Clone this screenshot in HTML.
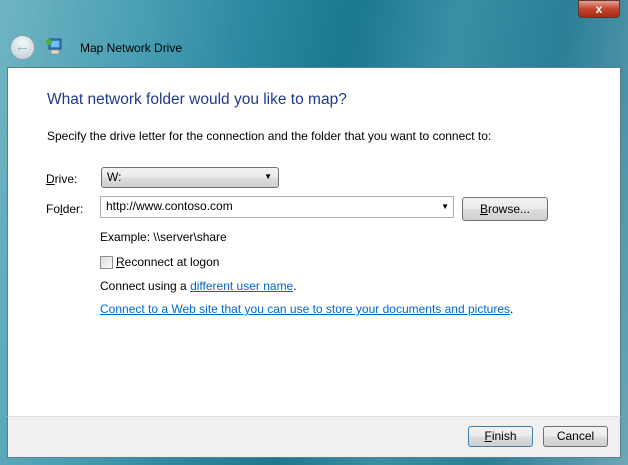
<!DOCTYPE html>
<html><head><style>
*{margin:0;padding:0;box-sizing:border-box}
body{width:628px;height:465px;overflow:hidden;font-family:"Liberation Sans",sans-serif;font-size:12px;color:#000;position:relative;
background:linear-gradient(100deg,#6fb5c4 0%,#4a9fb3 20%,#2d8aa3 35%,#1a7890 50%,#3a8fa5 65%,#2a7e96 80%,#6ba7b8 100%);}
.abs{position:absolute}
.white{left:7px;top:67px;width:614px;height:349px;background:#fff;border:1px solid #5a7f8c;border-bottom:none}
.foot{left:7px;top:416px;width:614px;height:42px;background:#f0f0f0;border:1px solid #5a7f8c;border-top:1px solid #dfdfdf}
.btn{border:1px solid #707070;border-radius:3px;background:linear-gradient(#f2f2f2 0%,#ebebeb 50%,#dddddd 51%,#cfcfcf 100%);text-align:center;line-height:20px}
a{color:#0066cc;text-decoration:underline}
.u{text-decoration:underline}
</style></head><body>
<div class="abs" style="left:578px;top:0;width:42px;height:18px;border-radius:0 0 4px 4px;background:linear-gradient(#e8a090,#c0452e 50%,#a82a15);border:1px solid #5a3a30;color:#fff;font-weight:bold;text-align:center;line-height:16px;font-size:12px">x</div>
<div class="abs" style="left:10px;top:35px;width:25px;height:25px;border-radius:50%;background:radial-gradient(circle at 50% 30%,#f4f8f9,#b8cdd3);border:1px solid #8aa3ab;color:#9ab;font-size:15px;text-align:center;line-height:22px">&#8592;</div>
<svg class="abs" style="left:45px;top:37px" width="18" height="19"><rect x="4" y="2" width="12" height="10" fill="#3a7fd0" stroke="#2a4c7a"/><rect x="6" y="4" width="8" height="6" fill="#6fc0f0"/><circle cx="4" cy="5" r="3" fill="#4caf3a"/><rect x="6" y="13" width="8" height="4" fill="#ddd" stroke="#999"/></svg>
<div class="abs" style="left:80px;top:41px;color:#000;font-size:12px">Map Network Drive</div>
<div class="abs white"></div>
<div class="abs" style="left:47px;top:91px;font-size:15.5px;color:#1e3a8c">What network folder would you like to map?</div>
<div class="abs" style="left:47px;top:129px">Specify the drive letter for the connection and the folder that you want to connect to:</div>
<div class="abs" style="left:46px;top:172px"><span class="u">D</span>rive:</div>
<div class="abs btn" style="left:101px;top:167px;width:178px;height:21px;text-align:left;padding-left:5px;line-height:18px">W:<span style="position:absolute;right:6px;top:0;font-size:8px">&#9660;</span></div>
<div class="abs" style="left:46px;top:202px">Fo<span class="u">l</span>der:</div>
<div class="abs" style="left:100px;top:196px;width:354px;height:22px;border:1px solid #abadb3;background:#fff;padding-left:5px;line-height:19px">http://www.contoso.com<span style="position:absolute;right:4px;top:0;font-size:8px">&#9660;</span></div>
<div class="abs btn" style="left:462px;top:197px;width:86px;height:24px;line-height:22px"><span class="u">B</span>rowse...</div>
<div class="abs" style="left:100px;top:230px">Example: \\server\share</div>
<div class="abs" style="left:100px;top:256px;width:13px;height:13px;border:1px solid #8f8f8f;background:linear-gradient(135deg,#dcdcdc,#fafafa)"></div>
<div class="abs" style="left:116px;top:255px"><span class="u">R</span>econnect at logon</div>
<div class="abs" style="left:100px;top:279px">Connect using a <a>different user name</a>.</div>
<div class="abs" style="left:100px;top:302px"><a>Connect to a Web site that you can use to store your documents and pictures</a>.</div>
<div class="abs foot"></div>
<div class="abs btn" style="left:468px;top:426px;width:65px;height:21px;border-color:#3c7fb1;line-height:19px"><span class="u">F</span>inish</div>
<div class="abs btn" style="left:543px;top:426px;width:65px;height:21px;line-height:19px">Cancel</div>
</body></html>
